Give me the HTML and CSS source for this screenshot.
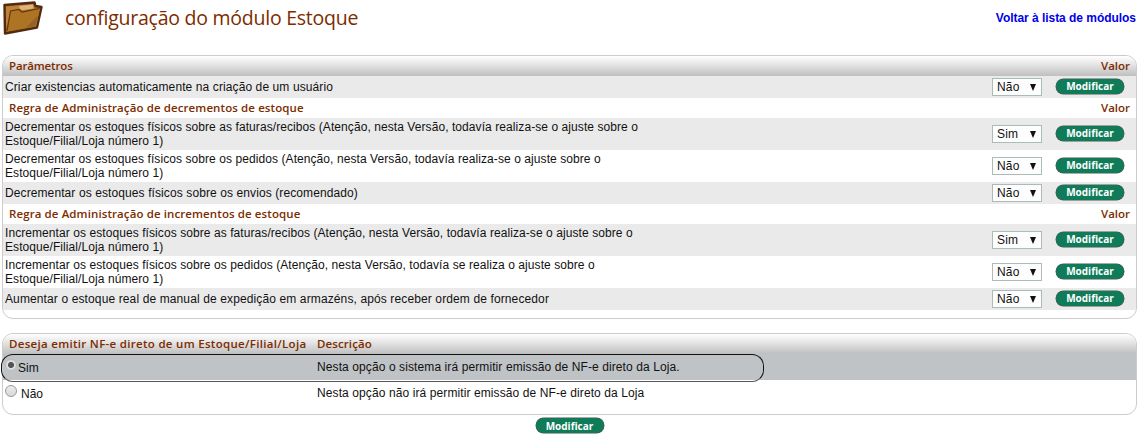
FILE: index.html
```
<!DOCTYPE html>
<html lang="pt-BR">
<head>
    <meta charset="UTF-8">
    <title>configuração do módulo Estoque</title>
    <link rel="stylesheet" href="styles.css">
</head>
<body>
    <div class="titre">
        <svg class="folder" width="43" height="36" viewBox="0 0 43 36">
            <path d="M3.500 4 L33.500 1.500 L34.500 5 L40.500 6 L36 26.500 L4 32.500 Z" fill="#a86f24" stroke="#512a12" stroke-width="2.400" stroke-linejoin="round"/>
            <path d="M5 5.500 L32 3.500 L32.500 7.500 L22 9.500 L20 11 L11 11 L5 26 Z" fill="#bd8437"/>
            <path d="M18 5 L32 3.500 L32.500 7.500 L22 9 L19 8 Z" fill="#dfb57d"/>
            <path d="M5.500 30.500 L9 10 L18 8.500 L21 11 L39 7.500 L35 25.500 Z" fill="#ad7423"/>
            <path d="M6 30 L9.500 10 L18 8.500 L21 11 L38.500 7.500" fill="none" stroke="#67350e" stroke-width="1.200"/>
            <path d="M25 26.500 L36.500 15 L34.500 25 Z" fill="#966127"/>
        </svg>
        <h1>configuração do módulo Estoque</h1>
        <a href="#" class="back">Voltar à lista de módulos</a>
    </div>

    <div class="noborder">
        <div class="row liste-titre"><span class="param">Parâmetros</span><span class="valor">Valor</span></div>
        <div class="row impair"><p>Criar existencias automaticamente na criação de um usuário</p><span class="combo"><select><option>Não</option><option>Sim</option></select></span><button class="button">Modificar</button></div>

        <div class="row sub-titre"><span>Regra de Administração de decrementos de estoque</span><span class="valor">Valor</span></div>
        <div class="row impair tall"><p>Decrementar os estoques físicos sobre as faturas/recibos (Atenção, nesta Versão, todavía realiza-se o ajuste sobre o<br>Estoque/Filial/Loja número 1)</p><span class="combo"><select><option>Sim</option><option>Não</option></select></span><button class="button">Modificar</button></div>
        <div class="row tall"><p>Decrementar os estoques físicos sobre os pedidos (Atenção, nesta Versão, todavía realiza-se o ajuste sobre o<br>Estoque/Filial/Loja número 1)</p><span class="combo"><select><option>Não</option><option>Sim</option></select></span><button class="button">Modificar</button></div>
        <div class="row impair"><p>Decrementar os estoques físicos sobre os envios (recomendado)</p><span class="combo"><select><option>Não</option><option>Sim</option></select></span><button class="button">Modificar</button></div>

        <div class="row sub-titre"><span>Regra de Administração de incrementos de estoque</span><span class="valor">Valor</span></div>
        <div class="row impair tall"><p>Incrementar os estoques físicos sobre as faturas/recibos (Atenção, nesta Versão, todavía realiza-se o ajuste sobre o<br>Estoque/Filial/Loja número 1)</p><span class="combo"><select><option>Sim</option><option>Não</option></select></span><button class="button">Modificar</button></div>
        <div class="row tall"><p>Incrementar os estoques físicos sobre os pedidos (Atenção, nesta Versão, todavía se realiza o ajuste sobre o<br>Estoque/Filial/Loja número 1)</p><span class="combo"><select><option>Não</option><option>Sim</option></select></span><button class="button">Modificar</button></div>
        <div class="row impair"><p class="last">Aumentar o estoque real de manual de expedição em armazéns, após receber ordem de fornecedor</p><span class="combo"><select><option>Não</option><option>Sim</option></select></span><button class="button">Modificar</button></div>
    </div>

    <form>
        <div class="noborder nfe">
            <div class="row liste-titre"><span class="option">Deseja emitir NF-e direto de um Estoque/Filial/Loja</span><span>Descrição</span></div>
            <div class="row choice selected">
                <label class="option"><input type="radio" name="nfe" checked>Sim</label>
                <p>Nesta opção o sistema irá permitir emissão de NF-e direto da Loja.</p>
                <div class="outline"></div>
            </div>
            <div class="row choice">
                <label class="option nao"><input type="radio" name="nfe">Não</label>
                <p>Nesta opção não irá permitir emissão de NF-e direto da Loja</p>
            </div>
        </div>
        <div class="center"><button type="button" class="button">Modificar</button></div>
    </form>
</body>
</html>
```

FILE: styles.css
```
* {
    box-sizing: border-box;
}
body {
    margin: 0;
    height: 445px;
    overflow: hidden;
    background: #fff;
    color: #111;
    font: 12px/14px "Liberation Sans", Arial, sans-serif;
}
.titre {
    display: flex;
    height: 55px;
    padding: 0 5px 0 1px;
}
.folder {
    margin-top: 1px;
}
h1 {
    margin: 4px 0 0 21px;
    color: #7c2c00;
    font: 400 19.5px/28px "Open Sans", sans-serif;
    letter-spacing: -0.25px;
    white-space: nowrap;
}
.back {
    margin: 11px 0 0 auto;
    color: #0000e8;
    font-weight: bold;
    letter-spacing: -0.04px;
    text-decoration: none;
}
.noborder {
    width: 1135px;
    height: 264px;
    margin-left: 2px;
    border: 1px solid #ccc;
    border-radius: 11px;
    overflow: hidden;
}
.row {
    display: flex;
    align-items: center;
    height: 22px;
    padding: 0 12px 0 2px;
}
.row p {
    margin: 0;
    flex: 1;
    white-space: nowrap;
    letter-spacing: 0.1px;
}
.row p.last {
    letter-spacing: 0.12px;
}
.tall {
    height: 32px;
}
.row.tall p {
    letter-spacing: 0.075px;
}
.impair {
    background: #eaeaea;
}
.liste-titre, .sub-titre {
    height: 20px;
    padding: 0 6px;
    color: #7c2c00;
    font: 600 11.5px/20px "Open Sans", sans-serif;
    letter-spacing: 0.1px;
}
.liste-titre {
    background: linear-gradient(#fff, #e0e0e0 50%, #bfbfbf);
}
.param {
    letter-spacing: -0.15px;
}
.valor {
    margin-left: auto;
    letter-spacing: 0;
}
.combo {
    position: relative;
    width: 50px;
    height: 18px;
    margin-left: -1px;
    margin-right: 14px;
}
.combo::after {
    content: "";
    position: absolute;
    right: 6px;
    top: 6px;
    border: 3.5px solid transparent;
    border-top: 7px solid #111;
    border-bottom: 0;
}
select {
    appearance: none;
    display: block;
    width: 50px;
    height: 18px;
    padding: 0 4px;
    border: 1px solid #abbbb8;
    border-radius: 0;
    background: #fdfdfd;
    color: #111;
    font: 12px "Liberation Sans", Arial, sans-serif;
    letter-spacing: 0.2px;
}
.button {
    display: block;
    width: 68px;
    height: 15px;
    padding: 0;
    border: 0;
    border-radius: 8px;
    background: #107b59;
    box-shadow: 0 0 0 0.5px #555;
    color: #fff;
    font: bold 10px/14px "Open Sans", sans-serif;
}
.row .button {
    margin-bottom: 2px;
}
.nfe {
    height: 82px;
    margin-top: 14px;
    overflow: visible;
}
.nfe .liste-titre {
    border-radius: 10px 10px 0 0;
}
.option {
    width: 308px;
    flex: none;
}
.liste-titre .option {
    letter-spacing: 0.3px;
}
.choice {
    position: relative;
    height: 26px;
}
.choice .option {
    display: flex;
    align-items: center;
    width: 312px;
    padding-top: 1px;
}
.selected {
    background: #bfc3c6;
}
.outline {
    position: absolute;
    left: -2px;
    top: 0;
    width: 763px;
    height: 28px;
    border: 1px solid #111;
    border-bottom-color: #555;
    border-radius: 12px;
}
input {
    appearance: none;
    width: 12px;
    height: 12px;
    margin: -5px 1px 0 0;
    border: 1px solid #999;
    border-radius: 50%;
    background: linear-gradient(#ececec, #d8d8d8);
}
input:checked {
    border-color: #b5bfbf;
    background: radial-gradient(circle, #555 0 2.6px, #ddd 3.4px);
}
.nao input {
    margin-right: 4px;
}
.center {
    display: flex;
    justify-content: center;
    padding: 3px 2px 0 0;
}
```
